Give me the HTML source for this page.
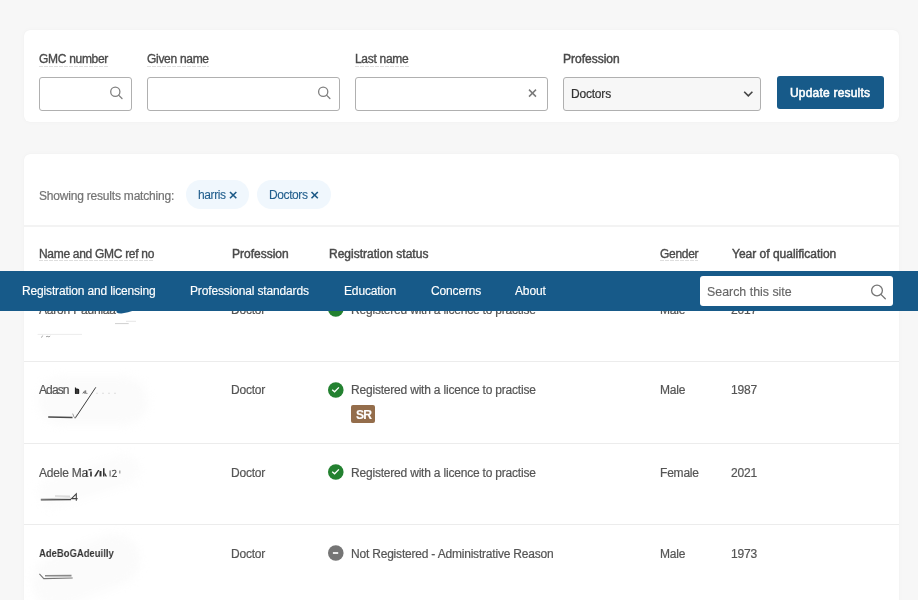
<!DOCTYPE html>
<html><head><meta charset="utf-8">
<style>
*{box-sizing:border-box;margin:0;padding:0}
html,body{width:918px;height:600px;overflow:hidden;background:#f7f7f7;font-family:"Liberation Sans",sans-serif;color:#555}
.a{position:absolute}
.card{position:absolute;background:#fff;border-radius:6px;box-shadow:0 0 1px rgba(0,0,0,.05),0 0 6px rgba(0,0,0,.025)}
.t{position:absolute;font-size:12px;letter-spacing:-0.2px;line-height:14px;white-space:nowrap;color:#555;will-change:transform;margin-left:-1px;-webkit-text-stroke:0.2px currentColor}
.lb{margin-left:-0.3px;letter-spacing:-0.3px;color:#4a4a4a;-webkit-text-stroke:0.35px #4a4a4a}
.lb2{margin-left:0.3px;letter-spacing:0;-webkit-text-stroke:0.45px #4a4a4a}
.u{position:absolute;height:1px;background-image:linear-gradient(90deg,#dedede 80%,transparent 80%);background-size:5px 1px}
.inp{position:absolute;border:1px solid #b0b0b0;border-radius:3px;background:#fff}
.nav{position:absolute;left:0;top:271px;width:918px;height:40px;background:#175a89}
.nt{position:absolute;top:13px;font-size:12px;letter-spacing:-0.15px;line-height:14px;color:#fff;white-space:nowrap;will-change:transform;margin-left:-1px;-webkit-text-stroke:0.15px currentColor}
.sep{position:absolute;left:24px;width:875px;height:1px;background:#ececec}
.chip{position:absolute;top:180px;height:29px;border-radius:15px;background:#f0f7fd}
.ct{color:#215e8d;letter-spacing:-0.4px;-webkit-text-stroke:0.1px currentColor}
svg{position:absolute;overflow:visible}
</style></head><body>
<!-- card 1 -->
<div class="card" style="left:24px;top:30px;width:875px;height:91.5px"></div>
<div class="t lb" style="left:39px;top:52px">GMC number</div>
<div class="u" style="left:39px;top:66px;width:69px"></div>
<div class="t lb" style="left:147px;top:52px">Given name</div>
<div class="u" style="left:147px;top:66px;width:62px"></div>
<div class="t lb" style="left:355px;top:52px">Last name</div>
<div class="u" style="left:355px;top:66px;width:54px"></div>
<div class="t lb lb2" style="left:563px;top:52px">Profession</div>

<div class="inp" style="left:39px;top:77px;width:93px;height:34px"></div>
<svg style="left:0;top:0" width="1" height="1"><g fill="none" stroke="#808080" stroke-width="1.3"><circle cx="115.3" cy="91.8" r="4.6"/><line x1="118.6" y1="95.1" x2="122" y2="98.5" stroke-linecap="round"/></g></svg>
<div class="inp" style="left:147px;top:77px;width:193px;height:34px"></div>
<svg style="left:0;top:0" width="1" height="1"><g fill="none" stroke="#808080" stroke-width="1.3"><circle cx="323.2" cy="91.8" r="4.6"/><line x1="326.5" y1="95.1" x2="329.9" y2="98.5" stroke-linecap="round"/></g></svg>
<div class="inp" style="left:355px;top:77px;width:193px;height:34px"></div>
<svg style="left:0;top:0" width="1" height="1"><g fill="none" stroke="#7a7a7a" stroke-width="1.5"><line x1="529" y1="89.6" x2="536" y2="96.6"/><line x1="536" y1="89.6" x2="529" y2="96.6"/></g></svg>
<div class="inp" style="left:563px;top:77px;width:198px;height:34px;background:#f7f7f7"></div>
<div class="t" style="left:571.5px;top:86.5px;color:#333">Doctors</div>
<svg style="left:0;top:0" width="1" height="1"><polyline points="744.2,91.8 748.3,95.9 752.4,91.8" fill="none" stroke="#444" stroke-width="1.6"/></svg>
<div class="a" style="left:776.5px;top:75.5px;width:107px;height:33.7px;background:#175a89;border-radius:3px"></div>
<div class="t" style="left:791px;top:85.6px;color:#fff;font-size:12px;letter-spacing:0.2px;-webkit-text-stroke:0.55px #fff">Update results</div>

<!-- card 2 -->
<div class="card" style="left:24px;top:154px;width:875px;height:470px"></div>
<div class="t" style="left:39.5px;top:188.5px;color:#737373">Showing results matching:</div>
<div class="chip" style="left:186px;width:63px"></div>
<div class="t ct" style="left:199px;top:188px">harris</div>
<svg style="left:0;top:0" width="1" height="1"><g stroke="#1d5a87" stroke-width="1.6"><line x1="230" y1="192" x2="236.3" y2="198.3"/><line x1="236.3" y1="192" x2="230" y2="198.3"/></g></svg>
<div class="chip" style="left:257px;width:74px"></div>
<div class="t ct" style="left:270px;top:188px">Doctors</div>
<svg style="left:0;top:0" width="1" height="1"><g stroke="#1d5a87" stroke-width="1.6"><line x1="311.5" y1="192" x2="317.8" y2="198.3"/><line x1="317.8" y1="192" x2="311.5" y2="198.3"/></g></svg>
<div class="sep" style="top:225px;height:2px;background:#f3f3f3"></div>

<div class="t lb" style="left:39.5px;top:246.6px">Name and GMC ref no</div>
<div class="u" style="left:39px;top:260px;width:114px"></div>
<div class="t lb lb2" style="left:231.5px;top:246.6px">Profession</div>
<div class="t lb lb2" style="left:328.5px;top:246.6px">Registration status</div>
<div class="t lb" style="left:660.5px;top:246.6px">Gender</div>
<div class="u" style="left:660px;top:260px;width:38px"></div>
<div class="t lb lb2" style="left:731.5px;top:246.6px">Year of qualification</div>

<!-- rows -->
<div class="a" style="left:38px;top:377px;width:110px;height:48px;border-radius:24px;background:#fbfbfb;filter:blur(4px)"></div>
<div class="a" style="left:36px;top:466px;width:106px;height:30px;border-radius:15px;background:#fcfcfc;filter:blur(4px);transform:rotate(-17deg)"></div>
<div class="a" style="left:30px;top:545px;width:112px;height:52px;border-radius:26px;background:#fbfbfb;filter:blur(5px);transform:rotate(-22deg)"></div>
<div class="t" style="left:39.5px;top:303.2px">Aaron Padhiaa</div>
<svg style="left:0;top:0" width="1" height="1">
<path d="M116.5,310.6 L133.8,310.6 Q128.5,312.9 121.5,313.4 Q117.5,313.5 116.5,312.2 Z" fill="#175a89"/>
<line x1="126" y1="321.3" x2="136" y2="321.3" stroke="#e6e6e6" stroke-width="1"/>
<line x1="115" y1="323.6" x2="128.7" y2="323.6" stroke="#d0d0d0" stroke-width="1"/>
<line x1="37.6" y1="334.4" x2="82" y2="334.4" stroke="#ececec" stroke-width="1"/>
<path d="M41.5,337.6 L42.6,335.6 M46,337 Q47,335.6 48,336.6 Q49,337.4 50.2,336" fill="none" stroke="#9a9a9a" stroke-width="0.9"/>
</svg>
<div class="t" style="left:231.5px;top:303.2px">Doctor</div>
<svg style="left:0;top:0" width="1" height="1"><circle cx="335.8" cy="309" r="7.8" fill="#238130"/></svg>
<div class="t" style="left:351.5px;top:303.2px">Registered with a licence to practise</div>
<div class="t" style="left:660.5px;top:303.2px">Male</div>
<div class="t" style="left:731.5px;top:303.2px">2017</div>
<div class="sep" style="top:361px"></div>

<div class="t" style="left:39.5px;top:383.2px;letter-spacing:-0.9px">Adasn</div>
<div class="a" style="left:74.7px;top:388.8px;width:3.9px;height:4.9px;background:#3a3a3a"></div>
<svg style="left:0;top:0" width="1" height="1">
<path d="M75.5,387.6 L75.5,393.6 M78.6,393.6 L78.6,390 Q78,388.8 76,389.2" fill="none" stroke="#222" stroke-width="1.2"/>
<path d="M82.8,393.5 Q84,390.5 86,390.8 L84.8,393.6 M83.3,392.5 L87.4,393.4" fill="none" stroke="#666" stroke-width="0.9"/>
<path d="M95.8,387.3 L75.2,418.2" fill="none" stroke="#3d3d3d" stroke-width="1"/>
<path d="M72.7,413.6 Q74,418 75.2,418.2 L77.1,414.5" fill="none" stroke="#888" stroke-width="0.8"/>
<path d="M48.2,416.9 L72.5,417.5" fill="none" stroke="#4a4a4a" stroke-width="1.5"/>
<path d="M96,393.3 L118,393.3" fill="none" stroke="#d8d8d8" stroke-width="0.8" stroke-dasharray="2 4"/>
</svg>
<div class="t" style="left:231.5px;top:383.2px">Doctor</div>
<svg style="left:0;top:0" width="1" height="1"><circle cx="335.8" cy="390" r="7.8" fill="#238130"/><polyline points="332.2,389.7 334.6,391.8 338.9,387.4" fill="none" stroke="#fff" stroke-width="1.35"/></svg>
<div class="t" style="left:351.5px;top:383.2px">Registered with a licence to practise</div>
<div class="t" style="left:660.5px;top:383.2px">Male</div>
<div class="t" style="left:731.5px;top:383.2px">1987</div>
<div class="a" style="left:351.4px;top:404.6px;width:23.8px;height:18.2px;background:#946d4b;border-radius:2px"></div>
<div class="t" style="left:357px;top:407.8px;color:#fff;font-size:12.2px;font-weight:bold;letter-spacing:-1px;-webkit-text-stroke:0.1px #fff">SR</div>
<div class="sep" style="top:443px"></div>

<div class="t" style="left:39.5px;top:465.5px">Adele Ma</div>
<svg style="left:0;top:0" width="1" height="1">
<g fill="#333">
<rect x="86" y="470.5" width="1.3" height="6"/><rect x="88.5" y="469" width="3" height="1.4"/><rect x="90" y="471.5" width="2" height="5" fill="#555"/>
<path d="M94,476.5 L98,470 L99.5,470 L96,476.5 Z"/><rect x="99.5" y="471" width="2" height="5.5"/>
<rect x="103" y="468.2" width="1.5" height="8.3"/><path d="M104.5,472 L107,476.5 L105.5,476.5 L104.5,474.5Z"/>
<rect x="109.5" y="470.5" width="1.2" height="6" fill="#777"/><path d="M112,471 Q116,469 116,472 L112.5,476.5 L117,476.5" fill="none" stroke="#555" stroke-width="1.1"/>
<rect x="119" y="470.5" width="1.5" height="3" fill="#aaa"/>
</g>
<path d="M40.8,499.8 L71,499.6" fill="none" stroke="#444" stroke-width="1.3"/>
<path d="M55,496 L70,496.2" fill="none" stroke="#c8c8c8" stroke-width="1"/>
<path d="M40.8,498.8 L71,498" fill="none" stroke="#aaa" stroke-width="0.6"/>
<path d="M76.3,500.7 L76.3,493.8 L71.5,498.6 L77.6,498.6" fill="none" stroke="#444" stroke-width="1.1"/>
</svg>
<div class="t" style="left:231.5px;top:465.5px">Doctor</div>
<svg style="left:0;top:0" width="1" height="1"><circle cx="335.8" cy="472" r="7.8" fill="#238130"/><polyline points="332.2,471.7 334.6,473.8 338.9,469.4" fill="none" stroke="#fff" stroke-width="1.35"/></svg>
<div class="t" style="left:351.5px;top:465.5px">Registered with a licence to practise</div>
<div class="t" style="left:660.5px;top:465.5px">Female</div>
<div class="t" style="left:731.5px;top:465.5px">2021</div>
<div class="sep" style="top:524px"></div>

<div class="t" style="left:40.3px;top:545.6px;font-weight:bold;color:#333;letter-spacing:0;transform:scaleX(0.81);transform-origin:0 0;font-size:11.7px;-webkit-text-stroke:0">AdeBoGAdeuilly</div>
<svg style="left:0;top:0" width="1" height="1">
<path d="M39.4,573.9 L43.8,578.6 L72.7,578" fill="none" stroke="#777" stroke-width="1.1"/>
<path d="M45,575.8 L71.5,575.6" fill="none" stroke="#8a8a8a" stroke-width="1.6"/>
</svg>
<div class="t" style="left:231.5px;top:547px">Doctor</div>
<svg style="left:0;top:0" width="1" height="1"><circle cx="335.8" cy="553" r="7.8" fill="#757575"/><line x1="332.9" y1="553" x2="338.2" y2="553" stroke="#fff" stroke-width="1.7"/></svg>
<div class="t" style="left:351.5px;top:547px">Not Registered - Administrative Reason</div>
<div class="t" style="left:660.5px;top:547px">Male</div>
<div class="t" style="left:731.5px;top:547px">1973</div>

<!-- nav -->
<div class="nav">
<span class="nt" style="left:23px">Registration and licensing</span>
<span class="nt" style="left:190.5px">Professional standards</span>
<span class="nt" style="left:344.5px">Education</span>
<span class="nt" style="left:431.5px">Concerns</span>
<span class="nt" style="left:515.5px">About</span>
<div class="a" style="left:700px;top:5px;width:193px;height:29.8px;background:#fff;border-radius:3px"></div>
<span class="nt" style="left:707.5px;top:13.6px;color:#666;font-size:12.4px;letter-spacing:0">Search this site</span>
<svg style="left:0;top:0" width="1" height="1"><g fill="none" stroke="#757575" stroke-width="1.3"><circle cx="877" cy="19.5" r="5.4"/><line x1="880.9" y1="23.4" x2="885.3" y2="27.8" stroke-linecap="round"/></g></svg>
</div>
</body></html>
